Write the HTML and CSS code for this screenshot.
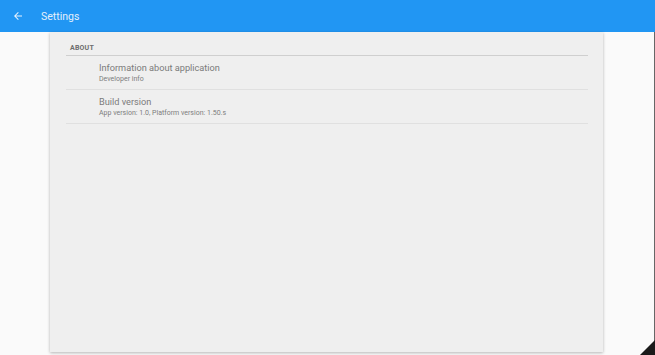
FILE: index.html
```
<!DOCTYPE html>
<html lang="en">
<head>
  <meta charset="utf-8">
  <title>Settings</title>
  <link rel="stylesheet" href="styles.css">
</head>
<body>
  <div class="toolbar">
    <svg class="back" width="12" height="12" viewBox="0 0 24 24"><path d="M20 11H7.83l5.59-5.59L12 4l-8 8 8 8 1.41-1.41L7.83 13H20v-2z" fill="#e8f2fd"/></svg>
    <span class="title">Settings</span>
  </div>
  <div class="main">
    <div class="panel">
      <div class="section-head">About</div>
      <div class="item">
        <div class="item-title">Information about application</div>
        <div class="item-sub">Developer info</div>
      </div>
      <div class="item">
        <div class="item-title">Build version</div>
        <div class="item-sub">App version: 1.0, Platform version: 1.50.s</div>
      </div>
    </div>
  </div>
  <div class="edge"></div>
  <div class="grip"></div>
</body>
</html>
```
FILE: styles.css
```
html, body {
    margin: 0;
    height: 100%;
}
body {
    font-family: Roboto, "Liberation Sans", sans-serif;
    background: #fafafa;
    display: flex;
    flex-direction: column;
    overflow: hidden;
    position: relative;
}
.toolbar {
    height: 32px;
    background: #2196f3;
    display: flex;
    align-items: center;
    padding-left: 12px;
    flex: none;
}
.back {
    display: block;
}
.title {
    margin-left: 17px;
    color: #e3effb;
    font-size: 10.5px;
}
.main {
    flex: 1;
    padding: 0 52px 3px 50px;
    display: flex;
}
.panel {
    flex: 1;
    background: #efefef;
    box-shadow: 0 1px 3px rgba(0,0,0,0.28);
    padding: 9px 15px 0 16px;
}
.section-head {
    text-transform: uppercase;
    font-size: 7px;
    font-weight: bold;
    color: #6d6d6d;
    padding: 3px 0 3px 4px;
    border-bottom: 1px solid #cfcfcf;
    letter-spacing: 0.2px;
}
.item {
    padding: 6px 0 5px 33px;
    border-bottom: 1px solid #e0e0e0;
}
.item-title {
    font-size: 9.2px;
    color: #7b7b7b;
    line-height: 12px;
}
.item-sub {
    font-size: 7px;
    color: #7d7d7d;
    line-height: 10px;
}
.edge {
    position: absolute;
    right: 0;
    top: 32px;
    bottom: 0;
    width: 1px;
    background: #666;
}
.grip {
    position: absolute;
    right: 0;
    bottom: 0;
    width: 0;
    height: 0;
    border-left: 15px solid transparent;
    border-bottom: 15px solid #1a1a1a;
}
```
